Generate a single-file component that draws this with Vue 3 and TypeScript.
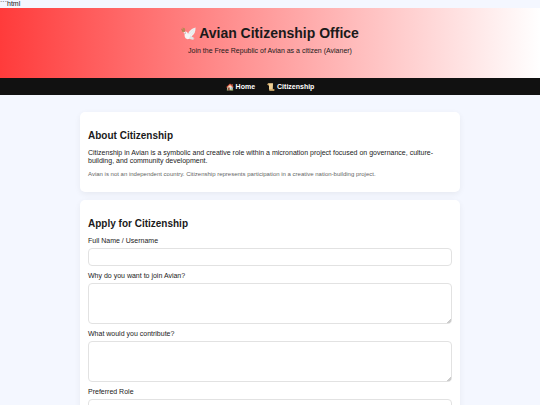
<script setup lang="ts">
import { ref } from 'vue'

interface Field {
  id: string
  label: string
  kind: 'input' | 'textarea' | 'select'
}

const fields: Field[] = [
  { id: 'name', label: 'Full Name / Username', kind: 'input' },
  { id: 'reason', label: 'Why do you want to join Avian?', kind: 'textarea' },
  { id: 'contribution', label: 'What would you contribute?', kind: 'textarea' },
  { id: 'role', label: 'Preferred Role', kind: 'select' },
]

const values = ref<Record<string, string>>({ name: '', reason: '', contribution: '', role: '' })
</script>

<template>
  <div class="page">
    <div class="stray">```html</div>
    <header class="banner">
      <h1>
        <svg class="dove" viewBox="0 0 32 32" aria-hidden="true">
          <path d="M8 14 3 9M7 12 6 5M5 11 1 6" stroke="#9a7a45" stroke-width="2" fill="none" />
          <path d="M3 3l5 2 1 4-5-1zM1 9l5 1 2 3-5 0z" fill="#b98a55" />
          <path d="M14 19C16 11 23 5 31 3c0 8-2 14-7 18l-5 3z" fill="#eef0f2" />
          <path d="M7 13c4-3 7 0 8 4l8 1c1 5-3 10-9 10-6-1-7-7-6-12l-3-1z" fill="#f7f5f5" />
          <path d="M20 21l9 5-3 1 1 3-10-3z" fill="#e0e3e6" />
          <path d="M17 18C20 14 24 9 29 6M19 21c4-3 7-6 9-10" stroke="#dde1e4" stroke-width="1" fill="none" />
          <circle cx="9" cy="15" r="1" fill="#444" />
        </svg>
        <span>Avian Citizenship Office</span>
      </h1>
      <p>Join the Free Republic of Avian as a citizen (Avianer)</p>
    </header>
    <nav class="menu">
      <a href="#home">
        <svg class="icon" viewBox="0 0 32 32" aria-hidden="true">
          <path d="M22 4h5v9h-5z" fill="#a85b43" />
          <path d="M5 14 16 5l11 9v15H5z" fill="#f5e6cf" />
          <path d="M1 16 16 2l15 14-3 3L16 8 4 19z" fill="#d9563d" />
          <path d="M8 18h7v11H8z" fill="#91513a" />
          <path d="M19 18h6v6h-6z" fill="#8fc4d7" />
          <path d="M3 26h5v4H3zM17 26h12v4H17z" fill="#7d9b53" />
        </svg>
        <span>Home</span>
      </a>
      <a href="#citizenship">
        <svg class="icon" viewBox="0 0 32 32" aria-hidden="true">
          <path d="M3 3q2-3 6-2h15l-1 25H8V9H4q-3-3-1-6z" fill="#f3d59a" />
          <path d="M3 3q4-3 5 1v5H4q-3-3-1-6z" fill="#d3a765" />
          <path d="M8 25h20q4 3 0 6H11q-4-1-3-6z" fill="#e8c27c" />
          <path d="M25 25q7 0 4 5-4 2-5-2z" fill="#c99a58" />
          <path d="M11 7h10M11 12h10M11 17h10M11 22h9" stroke="#d4ad70" stroke-width="1" />
        </svg>
        <span>Citizenship</span>
      </a>
    </nav>
    <main class="content">
      <section class="card">
        <h2>About Citizenship</h2>
        <p>
          Citizenship in Avian is a symbolic and creative role within a micronation project focused on
          governance, culture-building, and community development.
        </p>
        <p class="note">
          Avian is not an independent country. Citizenship represents participation in a creative
          nation-building project.
        </p>
      </section>
      <section class="card">
        <h2>Apply for Citizenship</h2>
        <form @submit.prevent>
          <div v-for="field in fields" :key="field.id" class="field">
            <label :for="field.id">{{ field.label }}</label>
            <input v-if="field.kind === 'input'" :id="field.id" v-model="values[field.id]" type="text" />
            <textarea v-else-if="field.kind === 'textarea'" :id="field.id" v-model="values[field.id]"></textarea>
            <select v-else :id="field.id" v-model="values[field.id]"></select>
          </div>
        </form>
      </section>
    </main>
  </div>
</template>

<style>
body {
  margin: 0;
  background: #f4f7ff;
}
</style>

<style scoped>
.page {
  color: #1a1a1a;
  font-family: "Liberation Sans", Arial, sans-serif;
  font-size: 7px;
  line-height: 8px;
}

.banner {
  padding: 17px 8px 23px;
  background: linear-gradient(90deg, #ff3b3b, #fff);
  text-align: center;
}

h1 {
  display: flex;
  justify-content: center;
  align-items: center;
  gap: 3px;
  margin: 0 0 6px;
  font-size: 14px;
  line-height: 16px;
}

.dove {
  width: 15px;
  height: 15px;
}

p {
  margin: 0;
}

.menu {
  display: flex;
  justify-content: center;
  gap: 12px;
  padding: 5px 4px 4px;
  background: #111;
}

.menu a {
  display: flex;
  align-items: center;
  gap: 2px;
  color: #fff;
  font-weight: bold;
  text-decoration: none;
}

.icon {
  width: 8px;
  height: 8px;
}

.content {
  display: flex;
  flex-direction: column;
  gap: 8px;
  max-width: 380px;
  margin: 0 auto;
  padding: 17px 8px;
}

.card {
  padding: 18px 8px 14px;
  border-radius: 5px;
  background: #fff;
  box-shadow: 0 2px 6px rgba(0, 0, 0, 0.06);
}

h2 {
  margin: 0 0 7px;
  font-size: 10px;
  line-height: 12px;
}

.note {
  margin-top: 5px;
  color: #666;
  font-size: 6px;
}

.field {
  display: flex;
  flex-direction: column;
  gap: 3px;
  margin-bottom: 6px;
}

input,
textarea,
select {
  box-sizing: border-box;
  width: 100%;
  height: 18px;
  margin: 0;
  padding: 4px;
  border: 1px solid #e2e2e2;
  border-radius: 4px;
  background: #fff;
  color: inherit;
  font: inherit;
}

textarea {
  height: 41px;
  resize: vertical;
}

textarea::-webkit-resizer {
  background: linear-gradient(135deg, transparent 84%, #ccc 84%, #ccc 96%, transparent 96%);
}
</style>
